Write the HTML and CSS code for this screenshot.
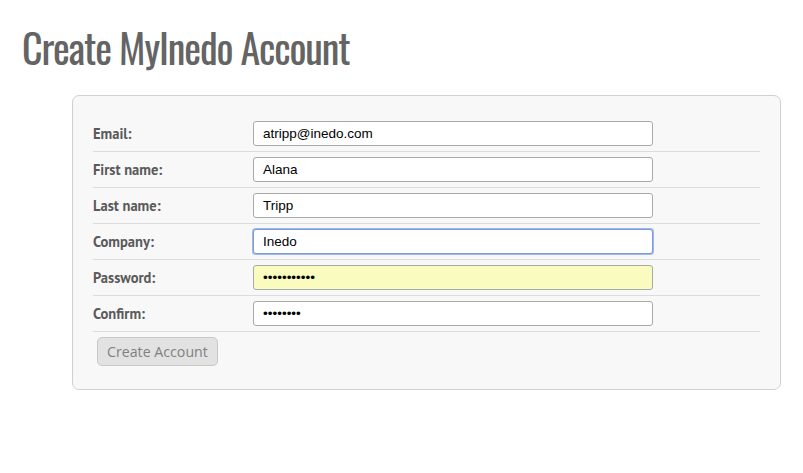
FILE: index.html
```html
<!DOCTYPE html>
<html>
<head>
<meta charset="utf-8">
<link rel="stylesheet" href="styles.css">
</head>
<body>
<h1 class="title">Create MyInedo Account</h1>
<form class="panel">
  <div class="row"><label class="lbl">Email:</label><input class="field" type="text" value="atripp@inedo.com"></div>
  <div class="row"><label class="lbl">First name:</label><input class="field" type="text" value="Alana"></div>
  <div class="row"><label class="lbl">Last name:</label><input class="field" type="text" value="Tripp"></div>
  <div class="row"><label class="lbl">Company:</label><input class="field focused" type="text" value="Inedo"></div>
  <div class="row"><label class="lbl">Password:</label><input class="field autofill" type="password" value="aaaaaaaaaaa"></div>
  <div class="row"><label class="lbl">Confirm:</label><input class="field" type="password" value="aaaaaaaa"></div>
  <div class="actions"><button class="btn" type="button">Create Account</button></div>
</form>
</body>
</html>
```
FILE: styles.css
```css
html, body { margin: 0; padding: 0; background: #fff; }
body { padding: 0 0 0 22px; }
.title {
  margin: 0;
  padding-top: 22px;
  height: 68px;
  box-sizing: border-box;
  font-family: "Oswald", "DejaVu Sans Condensed", "Liberation Sans", sans-serif;
  font-weight: normal;
  font-size: 40px;
  line-height: 50px;
  letter-spacing: -1.1px;
  color: #646464;
  white-space: nowrap;
}
.panel {
  margin: 27px 0 0 50px;
  width: 709px;
  box-sizing: border-box;
  border: 1px solid #d0d0d0;
  border-radius: 7px;
  background: #f8f8f8;
  padding: 20px 20px 23px 20px;
}
.row {
  display: flex;
  align-items: center;
  height: 36px;
  border-bottom: 1px solid #dcdcdc;
  box-sizing: border-box;
}
.lbl {
  width: 160px;
  font-family: "PT Sans", "Open Sans", sans-serif;
  font-weight: bold;
  font-size: 14.5px;
  color: #5a5a5a;
}
.field {
  width: 400px;
  height: 25px;
  box-sizing: border-box;
  border: 1px solid #a9a9a9;
  border-radius: 3px;
  background: #fff;
  padding: 0 9px;
  font-family: "Liberation Sans", Arial, sans-serif;
  font-size: 13.5px;
  color: #000;
  outline: none;
  margin: 0;
}
.field.focused {
  border: 1px solid #7b9bd8;
  box-shadow: 0 0 0 1px #9fb8e8;
}
.field.autofill { background: #fafcbf; }
.actions { padding-top: 5px; }
.btn {
  margin-left: 4px;
  height: 29px;
  padding: 0 9px;
  border: 1px solid #c8c8c8;
  border-radius: 5px;
  background: #e2e2e2;
  color: #808080;
  font-family: "Open Sans", sans-serif;
  font-size: 14.2px;
}
```
